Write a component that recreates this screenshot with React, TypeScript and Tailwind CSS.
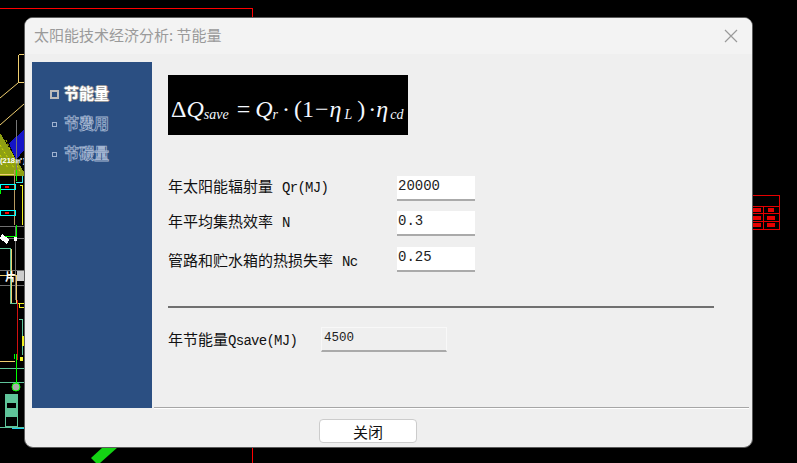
const serif = "font-['Liberation_Serif',serif] italic";
const sub = "mt-[11px] text-[14px]";

function CadBackground() {
  // the drawing behind the dialog
  return (
    <svg className="absolute inset-0" width="797" height="463" shapeRendering="crispEdges">
      <path d="M0 8.5H252.5V17M252.5 447V463" stroke="#ff0000" fill="none" />
      <path d="M18.5 54.5H24M18.5 54.5V82.5H24" stroke="#f0cf70" fill="none" />
      <path d="M0 98L18 83M0 125L24 104" stroke="#f0cf70" fill="none" shapeRendering="auto" />
      <path d="M0 133L24 172V176H0Z" fill="#8fa012" />
      <path d="M0 145L14 168M0 155L8 168M6 140L20 172" stroke="#d6e000" strokeDasharray="2 2" shapeRendering="auto" />
      <path d="M24 130L9 143L16 160L24 150Z" fill="#1414c8" />
      <path d="M16 120V170" stroke="#777777" />
      <text x="0" y="163" fontSize="7.5" fontWeight="700" fill="#ffffff" fontFamily="Liberation Sans">(218㎡)</text>
      <path d="M0 174.5H14" stroke="#f0cf70" />
      <path d="M16.5 170V181" stroke="#00ff00" />
      <path d="M14.5 170V225" stroke="#b89a60" />
      <path d="M22.5 176V182H16" stroke="#36e8e8" fill="none" />
      <rect x="0" y="184.5" width="15" height="5" stroke="#00ffff" fill="none" />
      <rect x="5" y="186" width="4" height="2" fill="#ff0000" />
      <path d="M0.5 188V194" stroke="#00ff00" />
      <path d="M20 185.5H22.5V225" stroke="#f0f020" fill="none" />
      <rect x="0" y="210.5" width="15" height="5" stroke="#00ffff" fill="none" />
      <rect x="5" y="212" width="4" height="2" fill="#ff0000" />
      <path d="M0 226.5H24M0 238.5H24M0 270.5H24M0 285.5H24M15.5 226V300" stroke="#707070" fill="none" />
      <path d="M16.5 225V237M3 236.5H16" stroke="#00ff00" fill="none" />
      <path d="M1 236L8 242" stroke="#ffffff" strokeWidth="5" />
      <rect x="14" y="237" width="3" height="4" fill="#ffffff" />
      <path d="M0 248.5H10.5V303.5H17" stroke="#5fc49a" fill="none" />
      <path d="M11.5 249V303M0 275.5H16V303" stroke="#f0cf70" fill="none" />
      <text x="5" y="281" fontSize="11" fontWeight="700" fill="#ffffff" fontFamily="Noto Sans CJK SC">片</text>
      <rect x="17" y="271" width="7" height="10" fill="#cccccc" />
      <path d="M17.5 300V360" stroke="#d01010" />
      <path d="M18 303.5H24M19.5 304V308M19 307.5H24" stroke="#f0f020" fill="none" />
      <path d="M18.5 319.5H22.5V355" stroke="#5fc49a" fill="none" />
      <rect x="22" y="336" width="2" height="10" fill="#f0f020" />
      <path d="M0 361.5H15" stroke="#f0cf70" />
      <rect x="20" y="357" width="3" height="4" fill="#f0f020" />
      <path d="M0 368.5H24M0 382.5H24" stroke="#5fc49a" fill="none" />
      <path d="M16.5 354V384M14.5 354V359" stroke="#00ff00" fill="none" />
      <circle cx="16" cy="387" r="4" stroke="#00ff00" fill="#aaaaaa" shapeRendering="auto" />
      <rect x="5" y="394" width="13" height="33" fill="#5fc49a" />
      <rect x="7" y="403" width="9" height="5" fill="#000000" />
      <rect x="6" y="417" width="11" height="9" fill="#000000" />
      <path d="M0 427.5H24" stroke="#5fc49a" />
      <path d="M12 428.5H24" stroke="#20d0f0" />
      <path d="M91 458L103 447H118L100 463H96Z" fill="#14d414" shapeRendering="auto" />
      <g stroke="#e60000" fill="none">
        <rect x="752.5" y="195.5" width="27" height="34" />
        <path d="M752 206.5H780M752 213.5H780M752 221.5H780M763.5 206V230" />
      </g>
      <g fill="#e60000">
        <rect x="753" y="208" width="8" height="4" />
        <rect x="768" y="208" width="6" height="4" />
        <rect x="753" y="216" width="8" height="4" />
        <rect x="767" y="216" width="8" height="4" />
        <rect x="753" y="223" width="8" height="4" />
        <rect x="767" y="223" width="8" height="4" />
      </g>
    </svg>
  );
}

function Formula() {
  return (
    <div className={`flex h-[60px] w-[240px] items-center whitespace-nowrap bg-black pl-[3px] pt-[8px] text-[24px] leading-none text-[#f4f8ff] ${serif}`}>
      <span className="not-italic">Δ</span>
      <span>Q</span>
      <span className={sub}>save</span>
      <span className="ml-[8px] not-italic">=</span>
      <span className="ml-[5px]">Q</span>
      <span className={sub}>r</span>
      <span className="ml-[4px] not-italic">·</span>
      <span className="ml-[4px] not-italic">(1</span>
      <span className="ml-[1px] not-italic">−</span>
      <span className="ml-[1px]">η</span>
      <span className={`ml-[3px] ${sub}`}>L</span>
      <span className="ml-[5px] not-italic">)</span>
      <span className="ml-[3px] not-italic">·</span>
      <span className="ml-0">η</span>
      <span className={`ml-[2px] ${sub}`}>cd</span>
    </div>
  );
}

const rows = [
  { label: "年太阳能辐射量", latin: "Qr(MJ)", value: "20000", gap: "mt-[41px]", nudge: "pb-[5px]" },
  { label: "年平均集热效率", latin: "N", value: "0.3", gap: "mt-[10px]", nudge: "pb-[5px]" },
  { label: "管路和贮水箱的热损失率", latin: "Nc", value: "0.25", gap: "mt-[11px]", nudge: "pt-[1px]" },
];

const menu = ["节费用", "节碳量"];

const App: React.FC = () => {
  return (
    <div className="relative h-[463px] w-[797px] overflow-hidden bg-black font-['Liberation_Mono','Noto_Sans_CJK_SC',monospace]">
      <CadBackground />
      <div className="absolute left-[24px] top-[17px] flex h-[431px] w-[729px] flex-col overflow-hidden rounded-[9px] border border-[#5c5c5c] bg-[#efefef]">
        <div className="flex h-[36px] shrink-0 items-center justify-between bg-[#f3f3f3] pl-[9px] pr-[14px]">
          <span className="pb-[2px] font-['Noto_Sans_CJK_SC',sans-serif] text-[15px] text-[#9a9a9a]">太阳能技术经济分析: 节能量</span>
          <svg width="14" height="14" viewBox="0 0 14 14" stroke="#9a9a9a" strokeWidth="1.2">
            <path d="M1 1L13 13M13 1L1 13" />
          </svg>
        </div>
        <div className="flex h-[354px] shrink-0 pl-[7px] pt-[8px]">
          <div className="flex w-[120px] shrink-0 flex-col gap-[13px] bg-[#2b4f82] pl-[18px] pt-[24px] font-['Noto_Sans_CJK_SC',sans-serif] text-[15px] font-bold leading-[14px]">
            <div className="flex h-[17px] items-center gap-[5px] text-white">
              <span className="h-[9px] w-[9px] border-2 border-[#bbb]" />
              <span className="pb-[3px] [text-shadow:1px_0_#999,-1px_0_#999,0_1px_#999,0_-1px_#999]">节能量</span>
            </div>
            {menu.map((item) => (
              <div key={item} className="flex h-[17px] items-center gap-[5px] text-[#2b4f82]">
                <span className="mx-[2px] h-[5px] w-[5px] border border-[#9fb2cf]" />
                <span className="pb-[3px] [-webkit-text-stroke:0.8px_#a3b5d1]">{item}</span>
              </div>
            ))}
          </div>
          <div className="mr-[3px] flex min-w-0 flex-1 flex-col">
            <div className="flex flex-1 flex-col pl-[16px] pr-[35px] pt-[13px]">
              <Formula />
              {rows.map((row) => (
                <div key={row.value} className={`flex items-center ${row.gap}`}>
                  <span className={`flex w-[229px] items-baseline whitespace-nowrap font-['Noto_Sans_CJK_SC',sans-serif] text-[15px] leading-none text-[#111] ${row.nudge}`}>
                    {row.label}
                    <span className="ml-[9px] font-['Liberation_Mono',monospace] text-[14px] tracking-[-0.72px]">{row.latin}</span>
                  </span>
                  <input
                    readOnly
                    value={row.value}
                    className="h-[25px] w-[78px] border-b-2 border-[#aaa] bg-white pb-[3px] pl-[1px] text-[14px] text-[#222] outline-none"
                  />
                </div>
              ))}
              <div className="mt-[34px] h-[2px] bg-[#707070]" />
              <div className="mt-[19px] flex items-center">
                <span className="flex w-[153px] items-baseline whitespace-nowrap font-['Noto_Sans_CJK_SC',sans-serif] text-[15px] leading-none text-[#111]">
                  年节能量
                  <span className="font-['Liberation_Mono',monospace] text-[14px] tracking-[-0.72px]">Qsave(MJ)</span>
                </span>
                <div className="h-[25px] w-[126px] border border-b-2 border-[#f8f8f8] border-b-[#aaa] pl-[2px] text-[12.5px] leading-[20px] text-[#222]">
                  4500
                </div>
              </div>
            </div>
            <div className="relative -mb-[1px] ml-[2px] h-[2px] shrink-0 border-t border-[#a6a6a6] bg-white" />
          </div>
        </div>
        <div className="flex flex-1 pl-[294px] pt-[11px]">
          <button className="h-[24px] w-[98px] rounded-[4px] border border-[#ccc] bg-white font-['Noto_Sans_CJK_SC',sans-serif] text-[15px] leading-none text-[#111]">
            关闭
          </button>
        </div>
      </div>
    </div>
  );
};

export default App;
